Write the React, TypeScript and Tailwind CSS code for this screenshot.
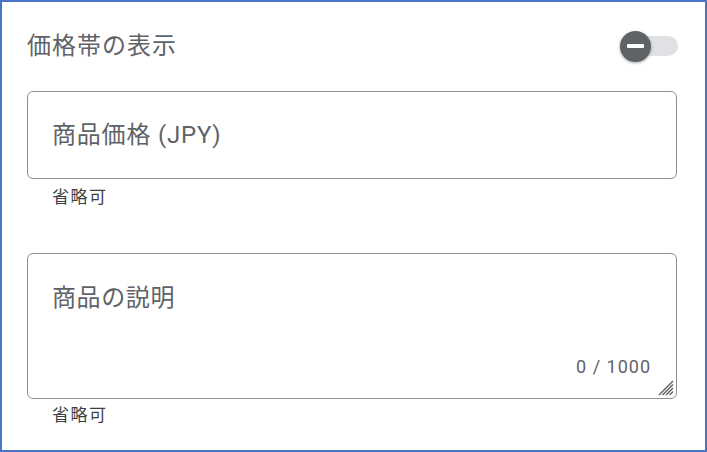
export default function App() {
  return (
    <div
      className="w-[707px] h-[452px] bg-white border-2 border-[#4a74c5] pl-[25px] pr-[28px] pt-[26px]"
      style={{ fontFamily: 'Roboto, "Noto Sans CJK JP", sans-serif' }}
    >
      <div className="flex items-center justify-between h-[36px]">
        <span className="text-[24px] text-[#5f6368] tracking-[1px]">価格帯の表示</span>
        <div className="relative w-[58px] h-[30px] flex items-center mr-[-1px]">
          <div className="absolute left-[2px] right-0 h-[20px] rounded-full bg-[#dfe1e5]" />
          <div className="relative w-[31px] h-[31px] rounded-full bg-[#5f6368] shadow-[0_1px_3px_rgba(0,0,0,0.35)] flex items-center justify-center">
            <div className="w-[17px] h-[4px] bg-white rounded-[1px]" />
          </div>
        </div>
      </div>

      <div className="mt-[27px]">
        <div className="h-[88px] rounded-[6px] border border-[#8c8f93] flex items-center px-[24px]">
          <span className="text-[24px] text-[#5f6368] tracking-[0.8px]">商品価格 (JPY)</span>
        </div>
        <div className="pl-[25px] pt-[6px] text-[17px] leading-[24px] text-[#3c4043] tracking-[1.5px]">省略可</div>
      </div>

      <div className="mt-[44px]">
        <div className="relative h-[146px] rounded-[6px] border border-[#8c8f93] px-[24px] pt-[26px]">
          <span className="text-[24px] text-[#5f6368] tracking-[0.6px]">商品の説明</span>
          <span className="absolute right-[25px] bottom-[18px] text-[18px] text-[#5f6368] tracking-[1px]">0 / 1000</span>
          <svg className="absolute right-[2px] bottom-[2px]" width="18" height="18" viewBox="0 0 18 18">
            <g stroke="#5f6368" strokeWidth="1.4">
              <line x1="3" y1="17" x2="17" y2="3" />
              <line x1="6.5" y1="17" x2="17" y2="6.5" />
              <line x1="10" y1="17" x2="17" y2="10" />
              <line x1="13.5" y1="17" x2="17" y2="13.5" />
            </g>
          </svg>
        </div>
        <div className="pl-[25px] pt-[4px] text-[17px] leading-[24px] text-[#3c4043] tracking-[1.5px]">省略可</div>
      </div>
    </div>
  );
}
